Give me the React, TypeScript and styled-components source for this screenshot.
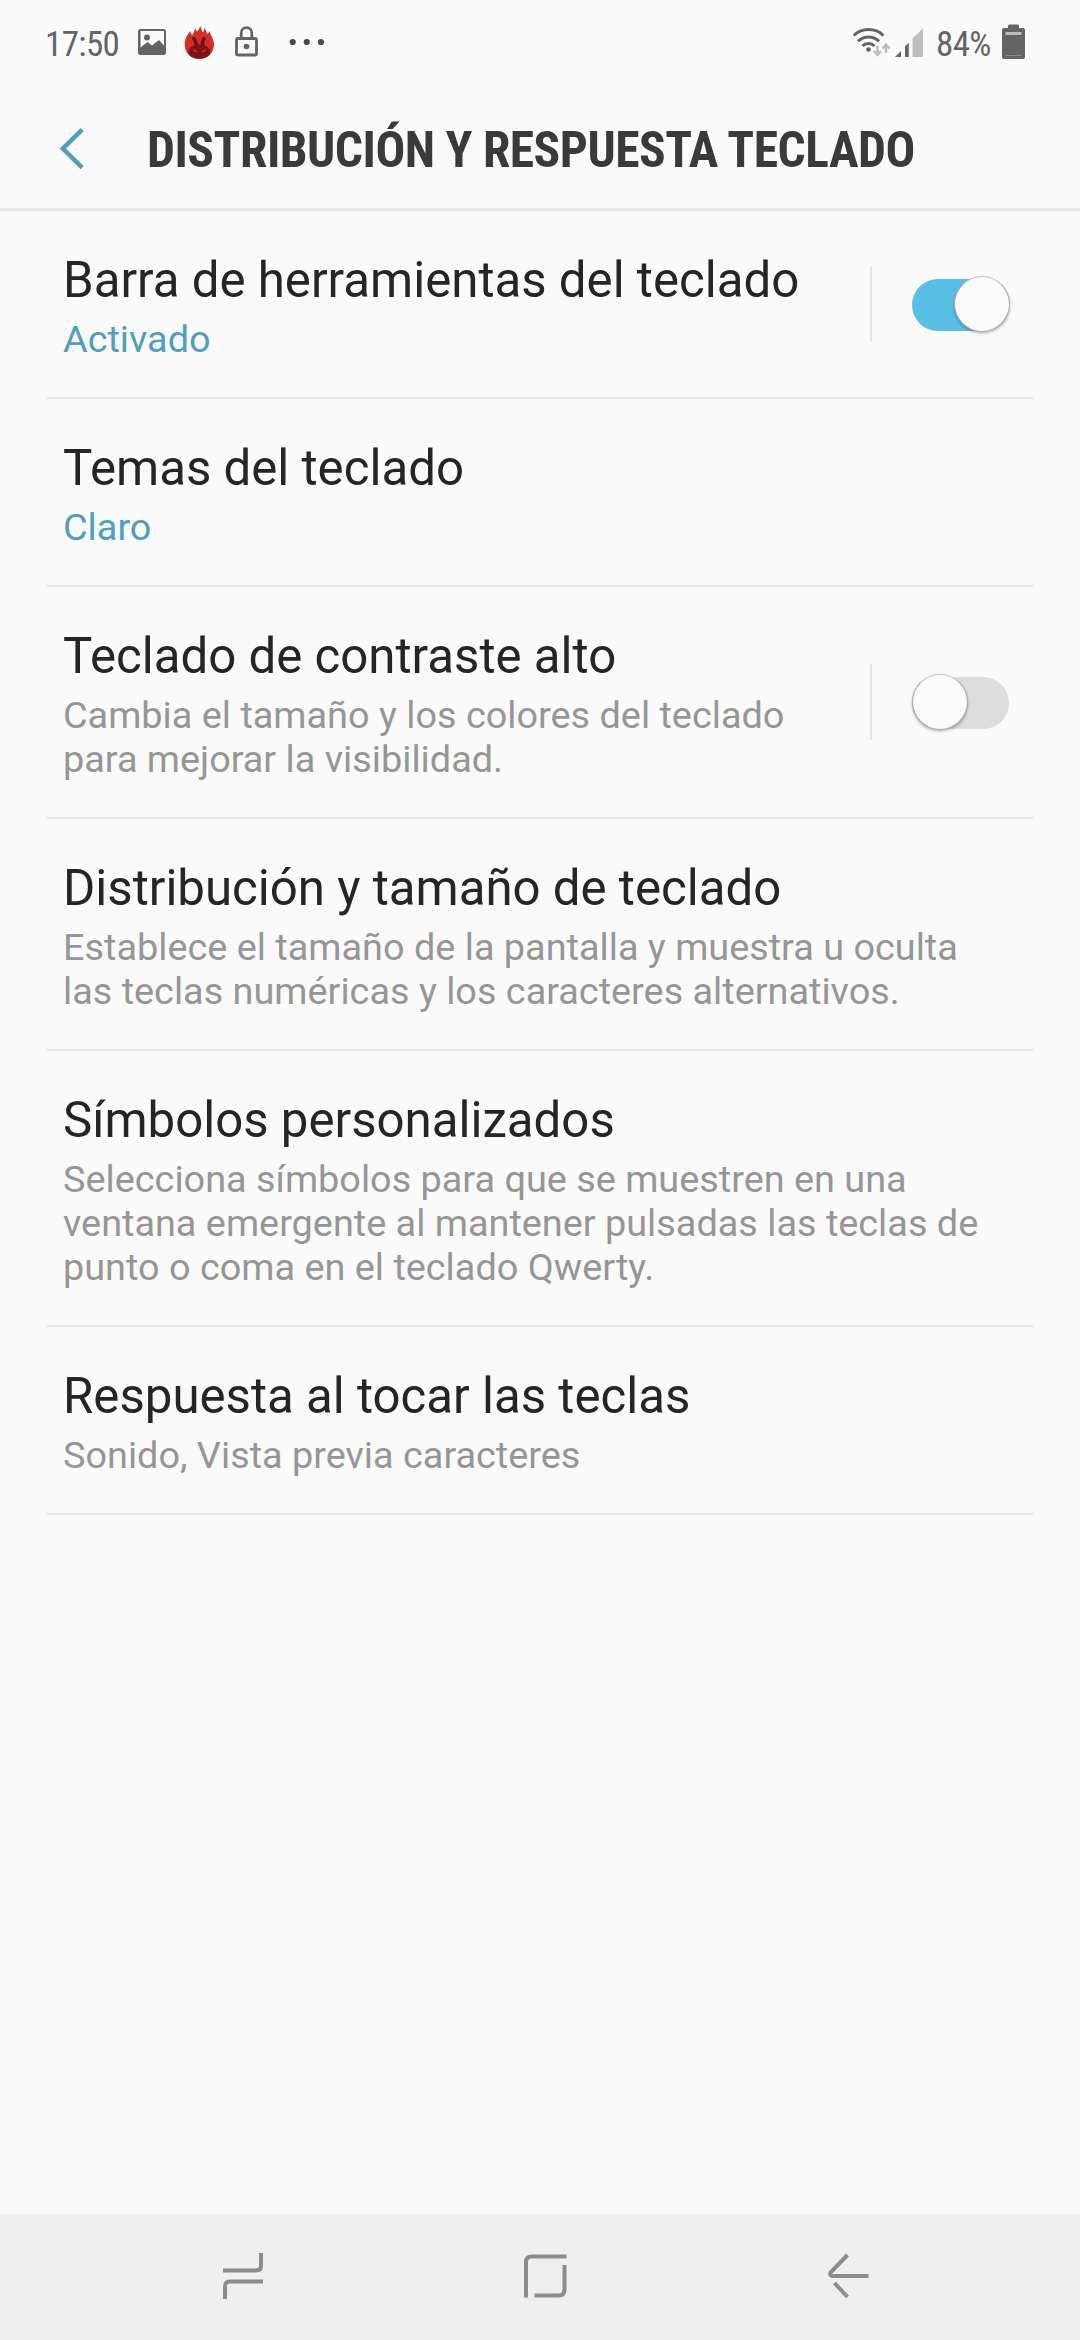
import React from "react";
import styled, { createGlobalStyle } from "styled-components";

const GlobalStyle = createGlobalStyle`
  html, body { margin: 0; padding: 0; background: #fafafa; }
  * { box-sizing: border-box; }
`;

const Screen = styled.div`
  width: 1080px;
  height: 2340px;
  display: flex;
  flex-direction: column;
  background: #fafafa;
  font-family: Roboto, "Noto Sans", sans-serif;
  color: #252525;
`;

const StatusBar = styled.header`
  height: 88px;
  flex: none;
  display: flex;
  justify-content: space-between;
  align-items: flex-start;
  padding: 0 54px 0 45px;
`;

const StatusGroup = styled.div`
  display: flex;
  align-items: flex-start;
`;

const StatusText = styled.span<{ $width: number }>`
  width: ${(p) => p.$width}px;
  padding-top: 24px;
  font-family: "Roboto Condensed", Roboto, sans-serif;
  font-stretch: 75%;
  font-size: 35px;
  line-height: 42px;
  letter-spacing: -0.6px;
  white-space: nowrap;
  color: #646464;
`;

const StatusIcon = styled.svg`
  display: block;
  flex: none;
  height: 88px;
`;

const TitleBar = styled.div`
  height: 123px;
  flex: none;
  display: flex;
  align-items: flex-start;
  border-bottom: 3px solid #e8e8e8;
`;

const BackButton = styled.button`
  width: 147px;
  height: 120px;
  padding: 0;
  border: 0;
  background: none;
`;

const Title = styled.h1`
  margin: 0;
  padding-top: 32px;
  font-family: "Roboto Condensed", Roboto, sans-serif;
  font-stretch: 75%;
  font-weight: 700;
  font-size: 49.5px;
  line-height: 60px;
  letter-spacing: -0.48px;
  white-space: nowrap;
  color: #3a3a3a;
`;

const List = styled.main`
  flex: 1;
  padding: 0 47px;
`;

const Row = styled.section`
  display: flex;
  justify-content: space-between;
  align-items: center;
  padding: 0 23px 0 16px;
  border-bottom: 2px solid #e5e5e5;
`;

const RowText = styled.div`
  padding: 40px 0 36px;
`;

const RowTitle = styled.h2`
  margin: 0 0 8px;
  font-weight: 400;
  font-size: 49.2px;
  line-height: 58px;
  white-space: nowrap;
`;

const RowSummary = styled.p<{ $accent?: boolean }>`
  margin: 0;
  font-size: 37.85px;
  line-height: 44px;
  white-space: pre-line;
  color: ${(p) => (p.$accent ? "#4f9fbe" : "#969696")};
`;

const SwitchArea = styled.div`
  height: 76px;
  display: flex;
  align-items: center;
  padding-left: 40px;
  border-left: 2px solid #e5e5e5;
`;

const Track = styled.div<{ $on: boolean }>`
  width: 97px;
  height: 52px;
  margin: 2px 1px 0 0;
  display: flex;
  align-items: center;
  justify-content: ${(p) => (p.$on ? "flex-end" : "flex-start")};
  border-radius: 26px;
  background: ${(p) => (p.$on ? "#58c0e5" : "#dddddd")};
`;

const Thumb = styled.div<{ $on: boolean }>`
  width: 56px;
  height: 56px;
  flex: none;
  margin: 0 ${(p) => (p.$on ? -1 : 0)}px 3px 0;
  border-radius: 50%;
  border: 1px solid #a9a9a9;
  border-top-color: #c4c4c4;
  background: #fbfbfb;
  box-shadow: 0 1.5px 3px rgba(0, 0, 0, 0.28);
`;

const NavBar = styled.nav`
  height: 126px;
  flex: none;
  display: flex;
  background: #efefef;
`;

const NavIcon = styled.svg`
  display: block;
  flex: none;
`;

interface Setting {
  title: string;
  summary: string;
  accent?: boolean;
  on?: boolean;
}

const settings: Setting[] = [
  { title: "Barra de herramientas del teclado", summary: "Activado", accent: true, on: true },
  { title: "Temas del teclado", summary: "Claro", accent: true },
  { title: "Teclado de contraste alto", summary: "Cambia el tamaño y los colores del teclado\npara mejorar la visibilidad.", on: false },
  { title: "Distribución y tamaño de teclado", summary: "Establece el tamaño de la pantalla y muestra u oculta\nlas teclas numéricas y los caracteres alternativos." },
  { title: "Símbolos personalizados", summary: "Selecciona símbolos para que se muestren en una\nventana emergente al mantener pulsadas las teclas de\npunto o coma en el teclado Qwerty." },
  { title: "Respuesta al tocar las teclas", summary: "Sonido, Vista previa caracteres" },
];

function Notifications() {
  return (
    <StatusIcon width="200" viewBox="130 0 200 88">
      <path fill="#646464" fillRule="evenodd" d="M140.500 29h23a2.500 2.500 0 0 1 2.500 2.500v21a2.500 2.500 0 0 1-2.500 2.500h-23a2.500 2.500 0 0 1-2.500-2.500v-21a2.500 2.500 0 0 1 2.500-2.500zM140.500 31v16.500l7-5.500 4.500 3.500 7-5.500 5 5.500V31zM147 34.500a3 3 0 1 1 0 6a3 3 0 1 1 0-6z" />
      <path fill="#d32f25" d="M199.300 59C190 59 184.700 52 184.700 44.500C184.700 39 187 35 190.500 31C190.500 33 191 34 192.300 35C194 33 194 31 195.500 28.500C196 30 196.300 31 197.300 31.500C198.500 30 199.500 28 200.500 26C201 29 202 31 203 32.500C204 31 204 30 204.500 28C206 30 206.500 32 207 34C208 33.500 208.700 32.500 209.500 31C210 35 214 38 214 44.500C214 52 208.500 59 199.300 59z" />
      <path fill="none" stroke="#6b1013" strokeWidth="3.400" strokeLinecap="round" d="M196.300 46c0-3-1-5.500-2.600-7.300M202.500 46c-.2-3 .2-5.500 1.300-7.500" />
      <ellipse cx="199.300" cy="51.700" rx="11" ry="7.300" fill="#791419" />
      <path stroke="#d32f25" strokeWidth="1.600" d="M193.300 50l4 1.800M206 50l-4 1.800" />
      <rect x="236.500" y="38.500" width="20" height="16.500" rx="1.500" fill="none" stroke="#646464" strokeWidth="2.800" />
      <path d="M241.200 38v-5a5.300 5.300 0 0 1 10.600 0v5" fill="none" stroke="#646464" strokeWidth="2.800" />
      <circle cx="246.500" cy="46.500" r="2.800" fill="#646464" />
      <g fill="#4a4a4a">
        <circle cx="292.700" cy="42" r="3.100" />
        <circle cx="306.800" cy="42" r="3.100" />
        <circle cx="321" cy="42" r="3.100" />
      </g>
    </StatusIcon>
  );
}

function Connectivity() {
  return (
    <StatusIcon width="86" viewBox="850 0 86 88">
      <g fill="none" stroke="#646464" strokeWidth="3">
        <path d="M853.800 35.500a21.500 21.500 0 0 1 29.600 0" />
        <path d="M858 41.300a15 15 0 0 1 21 0" />
        <path d="M862.500 46a8.500 8.500 0 0 1 12 0" />
      </g>
      <circle cx="868.500" cy="49.500" r="2.300" fill="#646464" />
      <g fill="none" stroke="#bdbdbd" strokeWidth="2.500">
        <path d="M877.500 46v8.500M874 51l3.500 3.800 3.500-3.800" />
        <path d="M886 53v-8.500M882.500 48.500l3.500-3.800 3.500 3.800" />
      </g>
      <path fill="#646464" d="M895 57l6-6v6zM905 46.500l3.800-3.800V57H905z" />
      <path fill="#bdbdbd" d="M912.500 38.500L923 28.500V57h-10.500z" />
    </StatusIcon>
  );
}

function Battery() {
  return (
    <StatusIcon width="24" viewBox="1002 0 24 88">
      <path fill="#646464" d="M1008 28v-2a1.500 1.500 0 0 1 1.500-1.500h8A1.500 1.500 0 0 1 1019 26v2h4a2 2 0 0 1 2 2v27a2 2 0 0 1-2 2h-19a2 2 0 0 1-2-2V30a2 2 0 0 1 2-2z" />
      <path fill="#bdbdbd" d="M1005.500 32h16v3h-16z" />
      <path fill="#8b8b8b" d="M1005.500 55h16v1h-16z" />
    </StatusIcon>
  );
}

function Switch({ on }: { on: boolean }) {
  return (
    <SwitchArea>
      <Track $on={on} role="switch" aria-checked={on}>
        <Thumb $on={on} />
      </Track>
    </SwitchArea>
  );
}

export default function App() {
  return (
    <Screen>
      <GlobalStyle />
      <StatusBar>
        <StatusGroup>
          <StatusText $width={85}>17:50</StatusText>
          <Notifications />
        </StatusGroup>
        <StatusGroup>
          <Connectivity />
          <StatusText $width={66}>84%</StatusText>
          <Battery />
        </StatusGroup>
      </StatusBar>
      <TitleBar>
        <BackButton>
          <svg width="147" height="120" viewBox="0 88 147 120">
            <path d="M82.200 129.600L62.800 148.600l19.400 19.100" fill="none" stroke="#4f9fbe" strokeWidth="4.500" />
          </svg>
        </BackButton>
        <Title>DISTRIBUCIÓN Y RESPUESTA TECLADO</Title>
      </TitleBar>
      <List>
        {settings.map((s) => (
          <Row key={s.title}>
            <RowText>
              <RowTitle>{s.title}</RowTitle>
              <RowSummary $accent={s.accent}>{s.summary}</RowSummary>
            </RowText>
            {s.on !== undefined && <Switch on={s.on} />}
          </Row>
        ))}
      </List>
      <NavBar>
        <NavIcon width="1080" height="126" viewBox="0 2214 1080 126" fill="none" stroke="#8c8c8c" strokeWidth="4">
          <path d="M223 2270.500h33q5 0 5-5V2253M225 2299v-12.500q0-5 5-5h33" />
          <path d="M526 2297.500V2262q0-5.500 5.500-5.500H566.500M534.500 2295.500H558.500q6 0 6-6V2265" />
          <path d="M847.500 2255l-17 17.500q-1 3.500 2 3.500H868.500M834.500 2283l13 14" />
        </NavIcon>
      </NavBar>
    </Screen>
  );
}
